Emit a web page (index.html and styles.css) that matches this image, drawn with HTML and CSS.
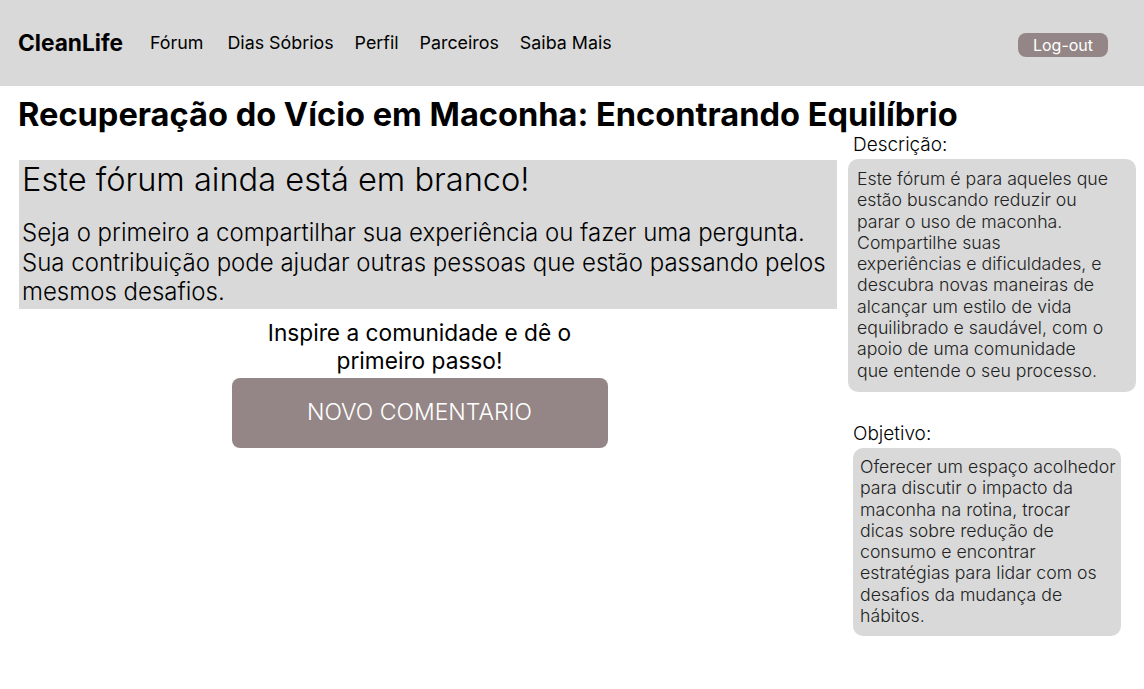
FILE: index.html
```html
<!DOCTYPE html>
<html lang="pt">
<head>
<meta charset="utf-8">
<link rel="stylesheet" href="styles.css">
</head>
<body>
<header class="topbar">
  <div class="brand">CleanLife</div>
  <nav class="nav">
    <a>Fórum</a>
    <a>Dias Sóbrios</a>
    <a>Perfil</a>
    <a>Parceiros</a>
    <a>Saiba Mais</a>
  </nav>
  <button class="logout">Log-out</button>
</header>
<main class="page">
  <h1 class="title">Recuperação do Vício em Maconha: Encontrando Equilíbrio</h1>
  <div class="columns">
    <section class="main-col">
      <div class="empty-box">
        <h2 class="empty-title">Este fórum ainda está em branco!</h2>
        <p class="empty-text">Seja o primeiro a compartilhar sua experiência ou fazer uma pergunta. Sua contribuição pode ajudar outras pessoas que estão passando pelos mesmos desafios.</p>
      </div>
      <div class="cta">
        <p class="cta-text">Inspire a comunidade e dê o primeiro passo!</p>
        <button class="cta-btn">NOVO COMENTARIO</button>
      </div>
    </section>
    <aside class="side-col">
      <div class="side-label">Descrição:</div>
      <div class="side-box desc">Este fórum é para aqueles que estão buscando reduzir ou parar o uso de maconha. Compartilhe suas<br>experiências e dificuldades, e descubra novas maneiras de alcançar um estilo de vida equilibrado e saudável, com o apoio de uma comunidade<br>que entende o seu processo.</div>
      <div class="side-label obj-label">Objetivo:</div>
      <div class="side-box obj">Oferecer um espaço acolhedor para discutir o impacto da maconha na rotina, trocar dicas sobre redução de consumo e encontrar estratégias para lidar com os desafios da mudança de hábitos.</div>
    </aside>
  </div>
</main>
</body>
</html>
```
FILE: styles.css
```css
* { box-sizing: border-box; }
body {
  margin: 0;
  font-family: Inter, "Noto Sans", sans-serif;
  color: #000;
  background: #fff;
}
.topbar {
  height: 86px;
  background: #d9d9d9;
  display: flex;
  align-items: flex-start;
  padding: 28px 36px 0 18px;
}
.brand {
  font-weight: 700;
  font-size: 22.7px;
  line-height: 30px;
  margin-right: 27px;
}
.nav {
  display: flex;
  gap: 21px;
  font-size: 17.85px;
  line-height: 30px;
}
.nav a { color: #000; }
.nav a:first-child { margin-right: 3px; }
.logout {
  margin-left: auto;
  margin-top: 5px;
  width: 90px;
  height: 24px;
  border: none;
  border-radius: 8px;
  background: #948686;
  color: #fff;
  font-family: inherit;
  font-size: 16px;
  padding: 0;
}
.page { padding: 0 8px 0 18px; }
.title {
  margin: 0;
  padding-top: 8px;
  font-size: 32.6px;
  line-height: 40px;
  font-weight: 700;
}
.columns {
  display: flex;
  align-items: flex-start;
}
.main-col {
  width: 818px;
  margin-left: 1px;
  margin-top: 26px;
}
.empty-box {
  background: #d9d9d9;
  padding: 0 3px 2px 3px;
}
.empty-title {
  margin: 0;
  font-size: 32.6px;
  line-height: 38px;
  font-weight: 300;
}
.empty-text {
  margin: 20px 0 0;
  font-size: 24px;
  line-height: 29.5px;
  font-weight: 300;
}
.cta {
  display: flex;
  flex-direction: column;
  align-items: center;
  margin-top: 10px;
  padding-right: 17px;
}
.cta-text {
  margin: 0;
  width: 340px;
  text-align: center;
  font-size: 22.7px;
  line-height: 28px;
}
.cta-btn {
  margin-top: 3px;
  width: 376px;
  height: 70px;
  border: none;
  border-radius: 8px;
  background: #948686;
  color: #fff;
  font-family: inherit;
  font-size: 23px;
  font-weight: 300;
  padding: 0 0 2px;
}
.side-col {
  margin-left: 11px;
  width: 288px;
}
.side-label {
  margin-left: 5px;
  font-size: 19px;
  line-height: 22px;
  font-weight: 300;
}
.side-box {
  background: #d9d9d9;
  border-radius: 10px;
  font-size: 17.7px;
  line-height: 21.3px;
  font-weight: 300;
  color: #222;
}
.desc {
  margin-top: 3px;
  width: 288px;
  padding: 9px 20px 11px 9px;
}
.obj-label { margin-top: 31px; }
.obj {
  margin-top: 3px;
  margin-left: 5px;
  width: 268px;
  padding: 8px 4px 10px 7px;
}
```
